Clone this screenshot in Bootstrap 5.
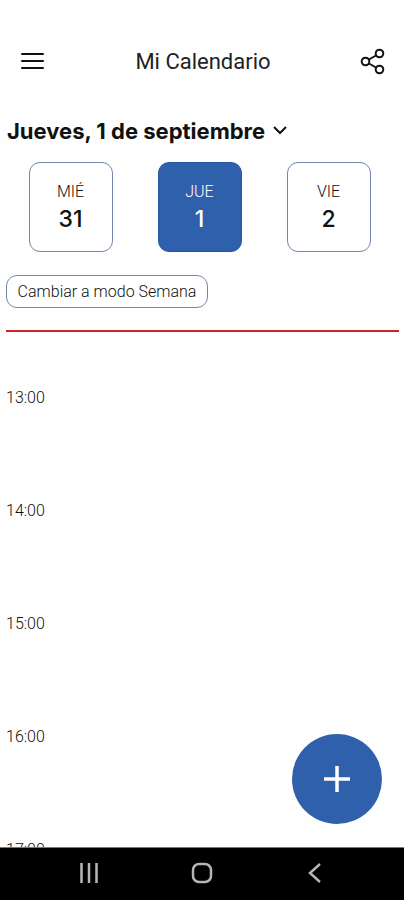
<!DOCTYPE html>
<html lang="es">
<head>
<meta charset="utf-8">
<meta name="viewport" content="width=device-width, initial-scale=1">
<title>Mi Calendario</title>
<link href="https://cdn.jsdelivr.net/npm/bootstrap@5.3.0/dist/css/bootstrap.min.css" rel="stylesheet">
<style>
  body { font-family: Roboto, sans-serif; color: #111; background: #fefefe; }
  .icon-btn { color: #111; line-height: 0; }
  .top-bar { padding: 40px 16px 0 18px; height: 84px; }
  .app-title { font-size: 22px; line-height: 28px; color: #222; }
  .date-btn { font: 700 22px/28px Inter, sans-serif; color: #111; margin: 33px 0 0 7px; gap: 8px; }
  .days { padding: 17px 11px 0 6px; }
  .day { width: 84px; height: 90px; border: 1px solid #7388ad; border-radius: 11px; background: #fff; color: #111; padding: 4px 0 0; }
  .day-name { font-size: 16px; line-height: 20px; font-weight: 300; }
  .day-num { font: 500 23px/34px Inter, sans-serif; }
  .day.selected { background: #2e60ac; border-color: #2457a5; color: #fff; }
  .mode-btn { margin: 23px 0 0 6px; height: 33px; width: 202px; border: 1px solid #7388ad; border-radius: 11px; background: #fff; color: #111; font-size: 16px; line-height: 20px; font-weight: 300; }
  .now-line { height: 2px; margin: 22px 5px 0 6px; background: #c9242b; opacity: 1; border: 0; }
  .hours { padding: 56px 6px 0; }
  .hour { height: 113px; font-size: 16px; line-height: 20px; font-weight: 300; color: #111; }
  .add-btn { width: 90px; height: 90px; right: 22px; bottom: 23px; background: #2e60ac; color: #fff; }
  .system-bar { height: 53px; padding: 0 32px 2px; background: #000; border-top: 1px solid #777; }
  .system-bar button { color: #b5b5b5; width: 40px; line-height: 0; }
</style>
<script src="https://cdn.jsdelivr.net/npm/bootstrap@5.3.0/dist/js/bootstrap.bundle.min.js" defer></script>
</head>
<body>
<div class="d-flex flex-column vh-100 overflow-hidden">
  <header class="top-bar d-flex align-items-center justify-content-between flex-shrink-0">
    <button type="button" class="icon-btn btn p-0 border-0" aria-label="Menú">
      <svg width="30" height="24" fill="none" stroke="currentColor" stroke-width="2" stroke-linecap="round"><path d="M4 4h21M4 11h21M4 18h21"/></svg>
    </button>
    <h1 class="app-title fw-normal m-0">Mi Calendario</h1>
    <button type="button" class="icon-btn btn p-0 border-0" aria-label="Compartir">
      <svg width="30" height="30" fill="none" stroke="currentColor" stroke-width="2"><circle cx="7.500" cy="14.500" r="3.800"/><circle cx="21.500" cy="6.500" r="3.800"/><circle cx="21.500" cy="22.500" r="3.800"/><path d="M11 12.500l7-4M11 16.500l7 4"/></svg>
    </button>
  </header>

  <main class="position-relative d-flex flex-column flex-grow-1 overflow-hidden">
    <button type="button" class="date-btn btn p-0 border-0 rounded-0 d-flex align-items-center align-self-start">
      <span>Jueves, 1 de septiembre</span>
      <svg width="14" height="10" fill="none" stroke="currentColor" stroke-width="2"><path d="M1 1l6 6 6-6"/></svg>
    </button>

    <div class="days d-flex justify-content-around">
      <button type="button" class="day d-flex flex-column align-items-center justify-content-center"><span class="day-name">MIÉ</span><span class="day-num">31</span></button>
      <button type="button" class="day selected d-flex flex-column align-items-center justify-content-center" aria-pressed="true"><span class="day-name">JUE</span><span class="day-num">1</span></button>
      <button type="button" class="day d-flex flex-column align-items-center justify-content-center"><span class="day-name">VIE</span><span class="day-num">2</span></button>
    </div>

    <button type="button" class="mode-btn btn p-0 align-self-start flex-shrink-0">Cambiar a modo Semana</button>
    <hr class="now-line flex-shrink-0">

    <div class="hours flex-grow-1 overflow-hidden">
      <div class="hour">13:00</div>
      <div class="hour">14:00</div>
      <div class="hour">15:00</div>
      <div class="hour">16:00</div>
      <div class="hour">17:00</div>
    </div>

    <button type="button" class="add-btn btn p-0 border-0 rounded-circle position-absolute d-flex align-items-center justify-content-center" aria-label="Añadir">
      <svg width="28" height="28" stroke="currentColor" stroke-width="3.500"><path d="M14 1v26M1 14h26"/></svg>
    </button>
  </main>

  <nav class="system-bar d-flex align-items-center justify-content-around flex-shrink-0" aria-label="Sistema">
    <button type="button" class="btn p-0 border-0" aria-label="Recientes"><svg width="20" height="20" stroke="currentColor" stroke-width="2.500"><path d="M2.500 0v20M10 0v20M17.500 0v20"/></svg></button>
    <button type="button" class="btn p-0 border-0" aria-label="Inicio"><svg width="22" height="22" fill="none" stroke="currentColor" stroke-width="2.500"><rect x="2" y="2" width="18" height="18" rx="6"/></svg></button>
    <button type="button" class="btn p-0 border-0" aria-label="Atrás"><svg width="14" height="20" fill="none" stroke="currentColor" stroke-width="2.500"><path d="M12 1l-10 9 10 9"/></svg></button>
  </nav>
</div>
</body>
</html>
